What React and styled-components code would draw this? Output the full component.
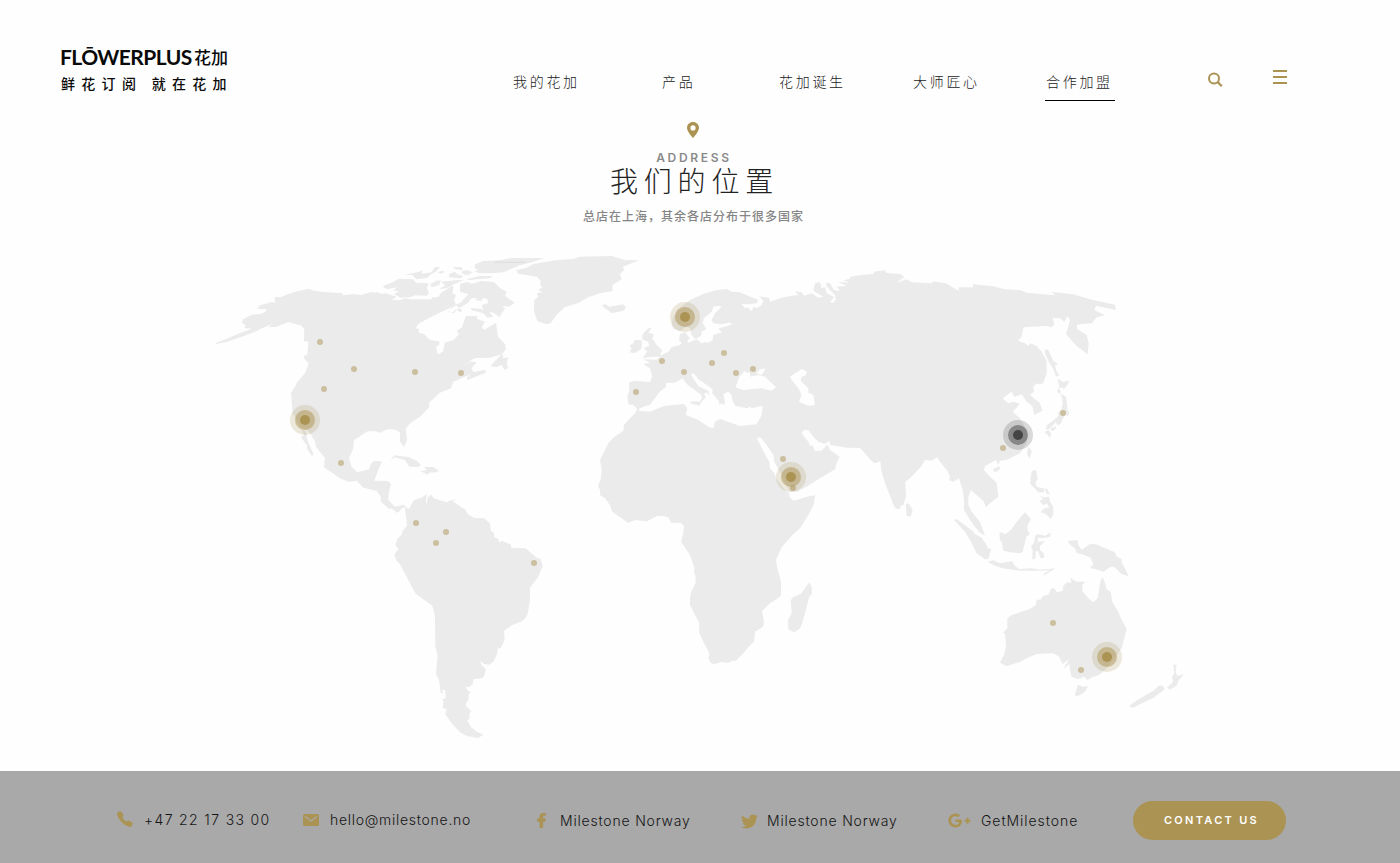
import React from "react";
import styled, { createGlobalStyle } from "styled-components";
import { FaFacebookF, FaTwitter, FaGooglePlusG } from "react-icons/fa";
import { IoCall } from "react-icons/io5";

const GOLD = "#ab9353";
const CJK = '"Noto Sans CJK SC", sans-serif';

const GlobalStyle = createGlobalStyle`
  * { box-sizing: border-box; }
  body { margin: 0; background: #fefefe; }
`;

const Page = styled.div`
  width: 1400px;
  height: 863px;
  display: flex;
  flex-direction: column;
  overflow: hidden;
  font-family: Inter, ${CJK};
`;

const Header = styled.header`
  height: 115px;
  flex: none;
  display: flex;
  align-items: flex-start;
  padding: 43px 0 0 60px;
`;

const Brand = styled.div`
  width: 453px;
  color: #0a0a0a;
  white-space: nowrap;
`;

const BrandName = styled.div`
  display: flex;
  height: 28px;
  line-height: 28px;
  font: 700 21px/27px Lato, sans-serif;
`;

const Latin = styled.span`
  width: 134px;
  letter-spacing: -0.55px;
`;

const Hanzi = styled.span`
  font: 500 17px/27px ${CJK};
`;

const Tagline = styled.div`
  margin-top: 2px;
  padding-left: 1px;
  font: 500 14px/20px ${CJK};
  letter-spacing: 6.3px;
`;

const Nav = styled.nav`
  display: flex;
  margin-top: 26px;
  width: 695px;
`;

const NavItem = styled.a`
  width: ${(p) => p.$w}px;
  font: 300 14px/24px ${CJK};
  letter-spacing: 2.7px;
  color: #222;
  white-space: nowrap;
`;

const NavLabel = styled.span`
  display: block;
  width: 70px;
  height: 32px;
  padding-left: ${(p) => (p.$active ? 1 : 0)}px;
  border-bottom: ${(p) => (p.$active ? "1px solid #000" : "none")};
`;

const Tools = styled.div`
  display: flex;
  gap: 50px;
  margin-top: 26px;
`;

const Menu = styled.div`
  width: 14px;
  height: 14px;
  margin-top: 1px;
  display: flex;
  flex-direction: column;
  justify-content: space-between;
`;

const MenuBar = styled.span`
  height: 2px;
  background: ${GOLD};
`;

const Intro = styled.section`
  height: 125px;
  flex: none;
  width: 1386px;
  display: flex;
  flex-direction: column;
  align-items: center;
  padding-top: 7px;
`;

const Eyebrow = styled.div`
  margin-top: 13px;
  font: 600 12px/14px Inter, sans-serif;
  letter-spacing: 2.7px;
  padding-left: 2px;
  color: #8a8a8a;
`;

const Title = styled.h1`
  margin: 0;
  font: 300 28px/30px ${CJK};
  letter-spacing: 5.8px;
  padding-left: 3px;
  color: #222;
`;

const Subtitle = styled.p`
  margin: 11px 0 0;
  font: 500 12px/20px ${CJK};
  letter-spacing: 1px;
  padding-left: 1px;
  color: #858585;
`;

const MapArea = styled.main`
  height: 531px;
  flex: none;
  padding-left: 200px;
  svg { display: block; }
`;

const Footer = styled.footer`
  height: 92px;
  flex: none;
  background: #a9a9a9;
  display: flex;
  align-items: center;
  padding: 6px 0 0 116px;
`;

const Contact = styled.a`
  width: ${(p) => p.$w}px;
  display: flex;
  align-items: center;
  margin-top: ${(p) => p.$drop || 0}px;
  color: #151515;
  white-space: nowrap;
`;

const IconSlot = styled.span`
  width: ${(p) => p.$w}px;
  height: 18px;
  display: flex;
  align-items: center;
  padding-bottom: ${(p) => p.$lift || 0}px;
  color: ${GOLD};
`;

const ContactText = styled.span`
  font: 300 14px/20px Inter, sans-serif;
  letter-spacing: ${(p) => p.$ls}px;
`;

const Button = styled.button`
  width: 153px;
  height: 39px;
  padding: 0 0 0 4px;
  margin-top: 1px;
  border: 0;
  border-radius: 20px;
  background: ${GOLD};
  color: #fff;
  font: 600 11px/39px Inter, sans-serif;
  letter-spacing: 2.3px;
`;

const NAV = [
  ["我的花加", 149],
  ["产品", 117],
  ["花加诞生", 134],
  ["大师匠心", 132],
  ["合作加盟", 70],
];

const LAND = [
  {
    at: "0 0",
    d: `M48 309L80 296L115 281L155 266L132 264L138 257L125 248L130 238L155 224L185 221L197 215L200 208L172 206L180 196L215 186L225 188L224 171L240 172L280 157L326 146L342 152L365 155L400 158L425 159L430 166L460 162L485 165L512 156L530 159L528 155L545 161L558 160L590 170L575 179L600 180L615 175L630 178L693 178L697 172L715 171L722 160L740 148L755 137L760 140L757 160L768 166L762 180L768 192L745 206L705 225L680 238L655 252L648 264L658 268L656 278L672 282L690 300L718 304L718 315L708 320L712 340L718 342L730 333L734 308L760 300L777 283L770 272L785 263L798 228L830 228L832 237L855 245L845 262L853 269L888 248L894 290L915 312L918 328L905 343L870 353L825 354L790 376L810 365L830 366L815 385L820 396L855 389L858 398L840 405L803 420L800 412L815 402L795 410L760 425L753 445L720 458L705 472L687 488L688 502L660 530L630 550L617 567L621 600L613 621L600 605L600 578L590 570L568 567L550 572L545 578L525 574L503 574L462 600L460 625L447 655L455 680L472 697L508 688L512 672L522 663L546 664L535 690L523 722L563 723L573 732L566 760L565 780L585 800L610 794L628 808L615 802L605 805L597 815L590 818L575 805L568 808L543 785L542 770L530 753L510 748L490 743L470 722L445 725L420 715L372 682L375 655L348 620L345 605L330 580L322 570L300 560L278 520L273 458L285 440L290 428L315 400L326 370L312 355L313 346L322 346L325 306L312 303L313 268L305 257L265 246L230 260L205 262L215 252L180 268L188 262L175 271L130 289L80 306L48 312Z
M302 565L318 575L322 600L333 625L341 645L335 647L320 625L322 618L303 592L312 585Z
M548 138L580 126L596 116L640 118L648 128L683 129L686 135L680 143L687 160L680 167L645 166L630 172L602 173L582 163L597 153L580 152L592 142L560 148Z
M614 104L655 96L668 91L665 101L695 97L705 80L720 81L710 93L690 105L682 114L650 118L636 105Z
M690 132L710 122L722 121L718 135L695 142ZM722 125L775 120L790 121L758 134L740 145L718 147L736 136Z
M713 97L727 92L736 96L722 101ZM748 101L765 95L772 103L790 108L782 115L747 112ZM757 80L785 82L790 91L765 87ZM783 95L797 90L818 96L805 106L790 103Z
M800 118L840 108L878 108L870 115L830 118L805 121Z
M827 72L850 63L900 61L935 54L1032 54L1000 65L960 76L910 97L885 99L840 100L822 94L835 91L823 84Z
M780 132L800 126L815 131L845 123L882 126L900 144L920 155L915 168L944 188L928 200L905 198L915 205L898 232L882 218L868 215L880 230L862 233L850 220L815 211L812 204L838 206L850 210L845 195L865 189L862 178L850 173L845 183L825 180L832 174L815 175L802 190L770 209L762 220L745 216L757 197L782 188L805 163L780 155Z
M745 212L768 196L788 212L780 217L768 208L755 219Z
M871 379L907 340L910 355L925 352L920 370L925 384L913 389L905 375L890 381Z
M571 661L583 646L625 651L650 662L663 674L655 681L628 680L615 661L585 652Z
M660 693L680 691L672 681L700 681L717 692L710 697L688 698L683 704Z
M948 91L980 83L1000 72L1070 60L1120 57L1140 50L1235 48L1275 60L1318 61L1268 80L1273 91L1260 102L1265 118L1238 134L1237 154L1200 160L1165 172L1135 189L1095 201L1070 224L1052 250L1038 253L1012 243L1002 215L1003 180L1015 170L1010 160L1027 156L1014 150L1028 142L1020 135L1022 122L1010 110L955 101Z`,
  },
  {
    at: "1140 60",
    d: `M345 113L375 100L410 90L440 87L455 95L480 97L515 112L535 120L530 130L510 133L485 132L495 145L503 142L515 154L520 140L530 144L545 135L550 123L538 109L567 113L570 125L605 113L635 107L655 105L645 94L665 97L672 107L695 100L715 113L730 110L700 92L705 70L718 66L725 78L722 85L735 82L740 100L755 107L763 112L750 125L758 130L768 118L765 105L740 80L738 68L750 70L762 90L780 92L770 80L800 78L775 65L810 68L790 61L850 47L880 43L885 35L905 32L905 602L885 610L868 595L840 563L800 563L750 555L748 543L735 552L715 545L700 530L685 510L672 510L665 520L685 545L690 558L697 555L705 572L725 572L742 553L750 570L779 590L770 610L765 628L720 655L680 680L650 695L628 694L605 645L583 605L580 585L560 555L543 533L530 533L548 570L568 605L570 625L583 640L590 658L615 690L628 700L628 710L640 722L680 710L705 706L702 732L685 765L660 805L640 822L605 862L588 900L592 925L603 965L603 1007L590 1018L570 1030L546 1053L552 1085L549 1100L525 1115L523 1143L505 1162L490 1180L468 1202L455 1203L445 1209L425 1206L400 1213L392 1208L385 1193L389 1183L370 1145L358 1120L357 1088L330 1035L330 1010L335 992L347 968L347 950L341 932L344 925L330 885L303 845L310 820L312 798L302 788L274 789L265 772L250 768L232 768L200 784L165 780L145 789L97 755L90 735L75 715L60 705L60 690L54 677L63 655L65 630L60 600L75 570L85 550L102 532L130 512L132 495L145 480L163 462L172 448L160 435L145 433L142 410L148 390L147 367L165 362L210 366L217 350L210 325L190 312L210 308L190 298L230 299L245 285L265 275L275 262L300 255L305 248L297 240L300 222L315 216L330 235L322 242L325 248L350 238L365 250L378 245L382 250L398 240L400 225L425 217L415 205L435 200L457 193L450 188L420 193L400 190L395 180L405 160L425 140L415 137L400 140L395 155L372 175L368 190L375 200L378 208L365 215L363 228L345 238L335 225L330 205L318 200L300 214L280 207L275 195L278 175L290 150L330 120Z
M176 447L190 440L210 434L228 410L240 395L258 380L258 368L285 368L308 355L320 372L340 388L362 403L366 413L360 425L335 424L330 430L358 437L365 425L378 412L372 402L380 397L389 407L385 393L355 378L333 345L340 339L355 358L385 378L398 388L397 400L418 425L418 435L426 430L432 437L435 425L430 403L445 395L455 405L457 420L465 437L500 445L510 440L515 445L548 437L545 465L530 493L480 498L420 477L405 485L400 505L385 500L355 480L317 465L322 445L312 432L255 437L235 445L210 455L178 453Z
M468 378L478 350L495 332L500 340L508 336L512 350L535 345L555 350L588 382L575 392L545 385L510 388L490 390L470 383ZM530 340L540 328L557 325L545 345Z
M630 350L665 327L680 335L678 345L665 350L662 362L685 385L685 398L700 405L705 435L685 437L657 425L665 405L655 385L635 360Z
M215 203L205 205L188 222L186 238L205 245L208 258L190 264L202 274L188 295L215 290L240 290L246 270L230 255L217 235L222 222L205 218Z
M183 240L163 240L160 250L148 257L155 265L148 277L165 279L183 268L187 250Z
M65 137L75 132L88 140L130 133L138 143L130 152L95 160L80 148Z
M688 967L695 980L696 1002L688 1010L679 1045L668 1085L660 1106L642 1117L625 1108L624 1080L635 1058L632 1020L640 1011L662 1002Z`,
  },
  {
    at: "1980 60",
    d: `M-30 51L0 45L40 42L42 35L75 31L80 39L120 42L133 50L110 68L140 58L155 67L215 70L220 64L258 70L295 92L298 82L340 82L338 73L400 79L435 88L480 90L500 98L585 106L575 96L640 103L690 118L765 134L768 150L708 137L703 150L735 166L710 172L695 190L665 192L650 195L652 207L680 225L686 250L683 283L650 258L618 222L622 210L630 180L622 168L613 186L600 175L578 173L583 193L575 202L560 198L490 202L485 230L474 242L495 250L505 258L510 250L530 258L545 275L560 303L560 340L550 370L538 373L530 370L520 380L522 395L510 405L540 430L547 452L523 465L517 438L500 425L485 403L463 410L455 395L428 415L445 430L460 425L480 432L458 455L480 475L500 510L500 550L480 580L440 600L420 602L415 615L408 600L375 618L372 630L390 650L410 668L415 710L395 725L378 742L370 722L350 705L332 690L325 715L325 735L335 755L360 785L375 827L360 818L340 795L312 750L312 720L308 690L297 655L280 666L268 660L270 650L262 632L240 605L232 592L215 602L195 600L185 618L150 655L136 665L138 710L130 735L121 738L120 748L105 745L95 720L75 670L65 635L60 597L45 610L28 598L30 590L0 563L-30 562Z
M137 730L148 732L158 750L152 770L140 767Z
M505 560L515 572L509 597L501 582ZM400 626L418 619L420 627L408 637L400 633Z
M516 632L528 630L533 655L526 670L530 680L552 686L553 697L535 697L511 671L512 652ZM540 708L552 712L568 710L570 725L580 740L580 763L573 776L560 765L553 760L541 757L553 745L567 743L561 730L550 736L538 722L550 718ZM553 683L562 688L570 704L560 702Z
M555 267L565 270L580 303L595 312L585 315L590 335L598 345L588 350L580 327L568 308L555 282Z
M593 355L608 366L628 362L622 375L612 388L605 382L596 386L603 395L596 402L591 392L598 380Z
M600 400L618 410L621 430L622 450L628 457L624 468L616 466L607 478L602 492L592 496L588 486L568 506L558 510L560 496L582 480L595 468L594 460L604 448L608 430L606 412ZM572 505L590 498L584 510L574 513ZM553 516L566 510L573 520L571 535L562 524Z`,
  },
  {
    at: "510 720",
    d: `M105 84L117 87L132 60L155 53L170 42L168 65L170 73L173 52L184 44L190 54L215 62L232 67L238 62L260 58L248 64L265 75L287 90L293 102L313 114L342 115L360 130L363 153L372 158L372 170L385 177L388 188L395 182L423 194L424 205L435 204L467 205L498 232L512 237L518 258L505 290L480 323L480 360L473 402L465 416L455 424L425 436L402 453L404 475L400 490L392 504L383 506L380 525L370 545L358 554L342 552L330 543L335 556L347 567L344 585L338 594L310 598L308 614L295 622L286 620L295 634L303 635L295 645L296 660L288 668L288 678L304 693L298 702L299 715L292 722L302 740L320 755L340 764L325 774L290 768L270 757L245 730L226 703L230 688L218 683L221 665L216 658L228 654L225 630L217 630L220 641L212 638L207 600L198 582L203 525L196 500L195 410L187 377L137 341L115 300L90 253L80 243L73 224L85 207L76 195L82 177L96 163L97 153L111 137Z`,
  },
  {
    at: "2190 750",
    d: `M72 90L80 87L115 113L130 125L135 132L155 143L170 165L173 174L184 177L175 207L165 208L140 190L123 155L105 125Z
M208 130L215 127L225 133L243 120L260 95L285 67L303 88L293 105L292 120L300 132L289 140L278 185L272 190L240 187L220 182L215 155L210 150Z
M172 215L190 211L210 220L247 214L253 226L267 237L305 235L330 239L376 235L340 258L345 249L360 240L340 242L280 242L250 240L215 234L190 225Z
M315 140L320 133L335 134L345 138L362 127L360 140L340 144L325 143L322 155L345 153L330 168L330 180L342 192L342 205L331 203L325 185L318 182L316 205L307 209L308 180L303 170L313 155Z
M413 153L442 150L445 165L455 180L480 162L498 163L555 187L560 200L575 207L575 218L585 235L596 258L575 253L553 230L540 232L520 245L498 238L480 234L490 223L482 203L455 192L440 190L435 175L420 164Z
M232 385L245 375L300 357L318 345L320 328L330 330L340 317L355 314L365 294L375 297L380 307L398 303L400 287L412 277L425 278L420 263L440 275L466 275L457 285L457 303L475 325L490 337L503 325L512 270L518 262L525 280L530 298L542 305L547 335L565 365L572 383L590 418L575 475L530 535L508 555L490 560L472 570L462 560L445 567L425 560L420 540L418 522L400 538L405 527L418 508L397 522L388 500L370 490L320 492L290 505L270 516L230 528L210 518L222 495L228 470L225 430L218 430L232 415Z
M444 584L460 590L474 588L465 605L450 616L435 618L437 605Z
M730 522L740 526L737 545L742 558L762 552L745 572L740 587L718 599L712 592L730 575L726 562L733 548ZM686 587L698 587L704 598L670 624L635 640L608 654L597 647L615 635L652 612L670 603Z`,
  },
];

const HUBS = [
  [305, 420, GOLD],
  [685, 317, GOLD],
  [791, 477, GOLD],
  [1107, 657, GOLD],
  [1018, 435, "#444"],
];

const SHOPS = [
  [320, 342], [354, 369], [415, 372], [461, 373], [324, 389], [341, 463],
  [416, 523], [446, 532], [436, 543], [534, 563], [662, 361], [684, 372],
  [712, 363], [724, 353], [736, 373], [753, 369], [636, 392], [783, 459],
  [793, 488], [1003, 448], [1063, 413], [1053, 623], [1081, 670],
];

function WorldMap() {
  return (
    <svg width="1000" height="531" viewBox="200 240 1000 531">
      <g transform="translate(200 240) scale(.33333)" fill="#ebebeb" fillRule="evenodd">
        {LAND.map((l) => (
          <path key={l.at} d={l.d} transform={`translate(${l.at})`} />
        ))}
        <path d="M883 67H975" stroke="#dedede" strokeWidth="3" />
      </g>
      {SHOPS.map(([x, y]) => (
        <circle key={`${x}-${y}`} cx={x} cy={y} r="3" fill={GOLD} opacity=".5" />
      ))}
      {HUBS.map(([x, y, c]) => (
        <g key={`${x}-${y}`} fill={c}>
          <circle cx={x} cy={y} r="15" opacity=".2" />
          <circle cx={x} cy={y} r="10" opacity=".5" />
          <circle cx={x} cy={y} r="5" />
        </g>
      ))}
    </svg>
  );
}

export default function App() {
  return (
    <Page>
      <GlobalStyle />
      <Header>
        <Brand>
          <BrandName>
            <Latin>FLŌWERPLUS</Latin>
            <Hanzi>花加</Hanzi>
          </BrandName>
          <Tagline>鲜花订阅 就在花加</Tagline>
        </Brand>
        <Nav>
          {NAV.map(([label, w], i) => (
            <NavItem key={label} $w={w}>
              <NavLabel $active={i === 4}>{label}</NavLabel>
            </NavItem>
          ))}
        </Nav>
        <Tools>
          <svg width="15" height="20" viewBox="0 0 15 20" fill="none" stroke={GOLD}>
            <circle cx="6" cy="9.5" r="5" strokeWidth="2" />
            <path d="M9.8 13.2L13.8 17.2" strokeWidth="2.3" />
          </svg>
          <Menu>
            <MenuBar />
            <MenuBar />
            <MenuBar />
          </Menu>
        </Tools>
      </Header>
      <Intro>
        <svg width="12" height="16" viewBox="0 0 12 16">
          <path
            fill={GOLD}
            fillRule="evenodd"
            d="M6 0C2.6 0 0 2.6 0 5.8C0 10 6 16 6 16S12 10 12 5.8C12 2.6 9.4 0 6 0ZM6 3.3A2.6 2.6 0 1 1 6 8.5A2.6 2.6 0 1 1 6 3.3Z"
          />
        </svg>
        <Eyebrow>ADDRESS</Eyebrow>
        <Title>我们的位置</Title>
        <Subtitle>总店在上海，其余各店分布于很多国家</Subtitle>
      </Intro>
      <MapArea>
        <WorldMap />
      </MapArea>
      <Footer>
        <Contact $w={187}>
          <IconSlot $w={28} $lift={3}><IoCall size={18} /></IconSlot>
          <ContactText $ls={1.35}>+47 22 17 33 00</ContactText>
        </Contact>
        <Contact $w={231}>
          <IconSlot $w={27}>
            <svg width="16" height="12" viewBox="0 0 16 12">
              <rect width="16" height="12" rx="1.5" fill={GOLD} />
              <path d="M2 2.5L8 7L14 2.5" fill="none" stroke="#a9a9a9" strokeWidth="1.2" />
            </svg>
          </IconSlot>
          <ContactText $ls={0.72}>hello@milestone.no</ContactText>
        </Contact>
        <Contact $w={207} $drop={2}>
          <IconSlot $w={26} $lift={2}>
            <FaFacebookF size={15} stroke="currentColor" strokeWidth="18" />
          </IconSlot>
          <ContactText $ls={0.8}>Milestone Norway</ContactText>
        </Contact>
        <Contact $w={207} $drop={2}>
          <IconSlot $w={26}><FaTwitter size={17} /></IconSlot>
          <ContactText $ls={0.8}>Milestone Norway</ContactText>
        </Contact>
        <Contact $w={185} $drop={2}>
          <IconSlot $w={33} $lift={1}><FaGooglePlusG size={23} /></IconSlot>
          <ContactText $ls={0.95}>GetMilestone</ContactText>
        </Contact>
        <Button>CONTACT US</Button>
      </Footer>
    </Page>
  );
}
